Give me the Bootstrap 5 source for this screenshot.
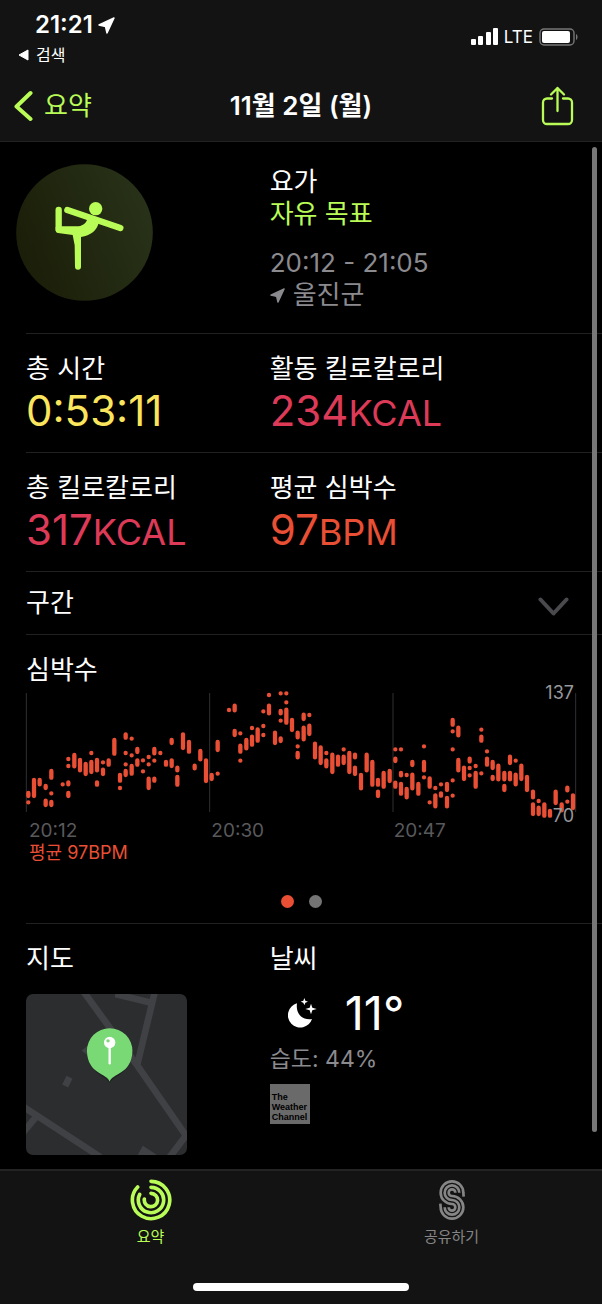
<!DOCTYPE html>
<html lang="ko" data-bs-theme="dark">
<head>
<meta charset="utf-8">
<meta name="viewport" content="width=device-width, initial-scale=1">
<title>11월 2일 (월)</title>
<link href="https://cdn.jsdelivr.net/npm/bootstrap@5.3.0/dist/css/bootstrap.min.css" rel="stylesheet">
<style>
  :root { --lime: #b9fb57; --bar: #131313; --rule: #212123; --dim: #8b8a8f; --heart: #e84f34; --move: #dd3a58; --time: #fbe55d; }
  body { background: #000; color: #fff; font-family: Inter, "Noto Sans CJK KR", sans-serif; font-size: 26px; line-height: 32px; }
  a { text-decoration: none; color: inherit; }
  svg { display: block; flex: none; }
  .top-bar { background: var(--bar); border-bottom: 1px solid #222; }
  .status-row { height: 70px; padding: 10px 24px 0 18px; }
  .clock { font-size: 24px; line-height: 30px; font-weight: 600; padding-left: 17px; gap: 5px; }
  .back-app { font-size: 16px; line-height: 30px; gap: 7px; }
  .carrier { font-size: 17px; line-height: 24px; padding-top: 15px; gap: 6px; }
  .title-row { height: 71px; padding: 0 14px; display: grid; grid-template-columns: 1fr auto 1fr; align-items: center; }
  .title-row h1 { font-size: 26px; line-height: 32px; font-weight: 600; }
  .share { margin-right: 14px; }
  .lime { color: var(--lime); }
  .dim { color: var(--dim); }
  .band { margin-left: 26px; border-bottom: 1px solid var(--rule); }
  .pair { display: grid; grid-template-columns: minmax(0, 11fr) minmax(0, 15fr); }
  .intro { padding: 22px 0; }
  .facts { padding-top: 2px; }
  .sport { width: 137px; margin-left: -10px; }
  .when { margin-top: 17px; }
  .metric { padding: 19px 0 15px; }
  .label-text { font-size: 26px; line-height: 32px; font-weight: 400; margin: 0; }
  .value { font-size: 42px; line-height: 52px; height: 52px; }
  .value small { font-size: 36px; line-height: 36px; }
  .time-value { color: var(--time); }
  .move-value { color: var(--move); }
  .heart-value { color: var(--heart); }
  .splits { height: 63px; padding: 0 33px 0 0; color: #fff; background: none; border-width: 0 0 1px; text-align: left; width: calc(100% - 26px); }
  .heart { padding: 19px 0 15px; }
  .plot { margin: 7px 26px 0 0; position: relative; }
  .plot svg { width: 100%; height: auto; overflow: visible; }
  .peak, .floor { position: absolute; right: 2px; font-size: 18px; line-height: 20px; color: #98989c; }
  .peak { top: -10px; }
  .floor { bottom: -7px; }
  .ticks { display: grid; grid-template-columns: repeat(3, 1fr); margin-right: 26px; font-size: 19px; line-height: 23px; color: #59595c; padding-left: 3px; }
  .average { font-size: 18px; line-height: 22px; color: var(--heart); padding-left: 3px; }
  .pager { gap: 15px; margin: 31px 26px 0 0; }
  .pager button { width: 13px; height: 13px; border: 0; padding: 0; border-radius: 50%; background: #747474; }
  .pager .on { background: var(--heart); }
  .place { padding: 19px 0 14px 26px; }
  .map { width: 161px; margin-top: 19px; border-radius: 7px; }
  .temp { font-size: 47px; line-height: 56px; margin-top: 10px; gap: 28px; padding-left: 18px; }
  .humid { font-size: 23px; line-height: 36px; }
  .twc { width: 40px; height: 40px; margin-top: 7px; padding: 8px 2px 0; background: #6a6a6a; color: #000; font: 700 9px/10px "Liberation Sans", sans-serif; }
  .scroller { position: absolute; right: 5px; top: 5px; bottom: 37px; width: 5px; border-radius: 3px; background: #777; }
  .tabs { background: var(--bar); border-top: 2px solid #242424; }
  .tabs a { font-size: 15px; line-height: 20px; padding-top: 8px; color: #858585; gap: 6px; }
  .tabs a.lime { color: var(--lime); }
  .home { width: 36%; height: 8px; border-radius: 4px; background: #fff; margin: 36px auto 13px; }
</style>
</head>
<body>
<div class="d-flex flex-column min-vh-100">
  <header class="top-bar">
    <div class="status-row d-flex justify-content-between align-items-start">
      <div>
        <div class="clock d-flex align-items-center">21:21
          <svg width="17" height="17" viewBox="0 0 17 17"><path d="M16 1 9 16 7.500 9.500 1 8Z" fill="#fff" stroke="#fff" stroke-width="1.500" stroke-linejoin="round"/></svg>
        </div>
        <a href="#" class="back-app d-flex align-items-center">
          <svg width="11" height="12" viewBox="0 0 11 12"><path d="M10 1V11L1 6Z" fill="#fff" stroke="#fff" stroke-linejoin="round"/></svg>검색</a>
      </div>
      <div class="carrier d-flex align-items-center">
        <svg width="27" height="18" viewBox="0 0 27 18" fill="#fff"><rect y="11" width="5" height="6" rx="1"/><rect x="7" y="8" width="5" height="9" rx="1"/><rect x="15" y="4" width="5" height="13" rx="1"/><rect x="22" width="5" height="17" rx="1"/></svg>
        <span>LTE</span>
        <svg width="39" height="18" viewBox="0 0 39 18"><rect x="1" y="1" width="34" height="16" rx="4" fill="none" stroke="#777" stroke-width="1.400"/><rect x="3" y="3" width="28" height="12" rx="2" fill="#fff"/><path d="M37 6c2 1 2 5 0 6Z" fill="#777"/></svg>
      </div>
    </div>
    <nav class="title-row">
      <a href="#" class="lime d-flex align-items-center">
        <svg width="30" height="32" viewBox="0 0 30 32" fill="none" stroke="currentColor" stroke-width="4" stroke-linecap="round" stroke-linejoin="round"><path d="M16.500 3 2.500 16.500 16.500 29"/></svg>요약</a>
      <h1 class="m-0">11월 2일 (월)</h1>
      <button class="btn p-0 border-0 lime ms-auto share" aria-label="공유">
        <svg width="33" height="40" viewBox="0 0 33 40" fill="none" stroke="currentColor" stroke-width="2.300" stroke-linecap="round" stroke-linejoin="round"><path d="M11 12.500H6a4 4 0 0 0-4 4V34a4 4 0 0 0 4 4H27a4 4 0 0 0 4-4V16.500a4 4 0 0 0-4-4H22M16.500 25V2M10 8.500 16.500 2 23 8.500"/></svg>
      </button>
    </nav>
  </header>

  <main class="position-relative flex-grow-1">
    <section class="band pair intro">
      <svg class="sport" viewBox="48 56 411 411">
        <defs><linearGradient id="disc" x1="0" y1=".6" x2="1" y2=".2"><stop stop-color="#1b1e08"/><stop offset="1" stop-color="#29331a"/></linearGradient></defs>
        <circle cx="253.500" cy="261.500" r="205" fill="url(#disc)"/>
        <g fill="#b9fb57"><circle cx="287" cy="190" r="20"/><path d="M167 245V256Q167 262 174 263L218 269 224 300 225 364A9 9 0 0 0 243 364V275C272 270 291 255 296 232L262 221C258 236 245 243 230 243H186Z"/></g>
        <path d="M202 194 361 248M176 194V252" stroke="#b9fb57" stroke-width="19" stroke-linecap="round"/>
      </svg>
      <div class="facts">
        <div>요가</div>
        <div class="lime">자유 목표</div>
        <div class="when dim">20:12 - 21:05</div>
        <div class="dim d-flex align-items-center gap-2">
          <svg width="15" height="15" viewBox="0 0 17 17"><path d="M16 1 9 16 7.500 9.500 1 8Z" fill="currentColor" stroke="currentColor" stroke-width="1.500" stroke-linejoin="round"/></svg>울진군</div>
      </div>
    </section>

    <section class="band pair metric">
      <div><h2 class="label-text">총 시간</h2><div class="value time-value">0:53:11</div></div>
      <div><h2 class="label-text">활동 킬로칼로리</h2><div class="value move-value">234<small>KCAL</small></div></div>
    </section>
    <section class="band pair metric">
      <div><h2 class="label-text">총 킬로칼로리</h2><div class="value move-value">317<small>KCAL</small></div></div>
      <div><h2 class="label-text">평균 심박수</h2><div class="value heart-value">97<small>BPM</small></div></div>
    </section>

    <button class="band splits d-flex align-items-center justify-content-between">
      <span>구간</span>
      <svg class="mt-2" width="31" height="20" viewBox="0 0 31 20" fill="none" stroke="#4a494d" stroke-width="4" stroke-linecap="round" stroke-linejoin="round"><path d="M2.500 2.500 15.500 16.500 28.500 2.500"/></svg>
    </button>

    <section class="band heart">
      <h2 class="label-text">심박수</h2>
      <div class="plot">
        <!-- three units to a pixel; one slot every 17.2 units -->
        <svg viewBox="0 42 1650 378">
          <path d="M1 42V399M551 42V399M1101 42V399M1649 42V399" stroke="#303032" stroke-width="3"/>
          <path id="beats" fill="none" stroke="#e84f34" stroke-width="13" stroke-linecap="round"/>
        </svg>
        <span class="peak">137</span><span class="floor">70</span>
      </div>
      <div class="ticks"><span>20:12</span><span>20:30</span><span>20:47</span></div>
      <div class="average">평균 97BPM</div>
      <div class="pager d-flex justify-content-center">
        <button class="on" aria-label="1페이지"></button><button aria-label="2페이지"></button>
      </div>
    </section>

    <section class="pair place">
      <div>
        <h2 class="label-text">지도</h2>
        <svg class="map" viewBox="78 315 481 481">
          <rect x="78" y="315" width="481" height="481" fill="#2c2d2f"/>
          <path d="M250 308 410 528 556 738 505 805M463 308 410 528M345 315 455 342M70 652 300 802M70 728 108 682M195 590 208 564" fill="none" stroke="#404145" stroke-width="20"/>
          <path d="M427 768 475 800H410ZM244 484 262 470V498Z" fill="#404145"/>
          <path d="M328 582C320 560 266 555 260 492A68 68 0 0 1 396 492C390 555 336 560 328 582Z" fill="#000" opacity=".25"/>
          <path d="M328 577C322 551 262 556 260 485A68 68 0 0 1 396 485C394 556 334 551 328 577Z" fill="#79d975"/>
          <path d="M328 470V522" stroke="#fff" stroke-width="7" stroke-linecap="round"/><circle cx="328" cy="460" r="17" fill="#fff"/><circle cx="323" cy="455" r="5" fill="#79d975"/>
        </svg>
      </div>
      <div>
        <h2 class="label-text">날씨</h2>
        <div class="temp d-flex align-items-center">
          <svg width="29" height="30" viewBox="114 321 87 90" fill="#fff"><path d="M141 337A37 37 0 1 0 186 384C160 389 136 370 141 337ZM163 321 166 329 174 332 166 335 163 343 160 335 152 332 160 329ZM183 338 187 350 200 354 187 358 183 370 179 358 166 354 179 350Z"/></svg>
          <span>11°</span>
        </div>
        <div class="humid dim">습도: 44%</div>
        <div class="twc">The<br>Weather<br>Channel</div>
      </div>
    </section>
    <div class="scroller"></div>
  </main>

  <footer class="tabs">
    <nav class="d-flex">
      <a href="#" class="lime col-6 d-flex flex-column align-items-center">
        <svg width="42" height="42" viewBox="90 45 126 126" fill="none" stroke="currentColor" stroke-width="11" stroke-linecap="round"><path d="M153 52A56 56 0 1 1 113 69M153 70A38 38 0 1 1 119 91M153 88A20 20 0 1 1 133 105"/></svg>요약</a>
      <a href="#" class="col-6 d-flex flex-column align-items-center">
        <svg width="42" height="42" viewBox="121 46 126 126" fill="none" stroke="currentColor" stroke-width="8"><path d="M219 99 218 87A34 34 0 1 0 184 121 10 10 0 1 1 174 131M206 87A22 22 0 1 0 184 109 22 22 0 1 1 162 131M194 87A10 10 0 1 0 184 97 34 34 0 1 1 150 131L149 120"/></svg>공유하기</a>
    </nav>
    <div class="home"></div>
  </footer>
</div>
<script src="https://cdn.jsdelivr.net/npm/bootstrap@5.3.0/dist/js/bootstrap.bundle.min.js"></script>
<script>
  // One entry per slot: "top-bottom" is a range, a lone number a single reading.
  const slots = `336-357 370|297-357|297-322|315-333 359-384|270-302 343 363-384||316|240 261 304-322 336-357|222-268|237-280|249-291|222 243-285|237-280 304-323|250 266-291|238-263|177-230|282-311 327|160-182 222 256 270-294|179 229 255-290|204-225 238-263|244 277|234 256 293-333|204-229 245 293-311|222|243-263|177-198 238-267|260-280 288-323|160-213|183-224|254-274|210-247|238-312|282-306|183-219 284||93|74-100 150-174|163 194-224 245|177-214|147 167-203|145-191|97 141 168|48 74-109|155-198|43 90-109 125 172-192|43 70 86-137|117-159|155-181 202 216-241|101-126 140-187|108 134-171|188-241|199-258|222 238-268|221-285|227-263|211 227-258|216-285|221-241 260-291|282-334|221-280|243-323|297-323 332-357|276-329|270-312|211 233-252 305-329|211 276-295 309-350|288 324-361|243-264 281-334|309-350|202 243-280 295|292-329 370|327 343-388|316 337-356|309-339 351-388|117-143 157 211 304 350|140-175 237-280|260-306|233-253 267 289|261 276-329|152 167-191 283|217 233-263|243-273 288-306|254-307|276-307 315-339|227-258 276-307|245 281-322|254-306|288-339|332-361 370-411|366 380-411|370-416|390-416|332-378|370-400|320-340 368|343-393`.split('|');
  document.getElementById('beats').setAttribute('d', slots.map((slot, i) =>
    slot.split(' ').filter(Boolean).map(r => {
      const [a, b] = r.split('-').map(Number);
      const x = Math.round(7 + i * 17.2);
      return b ? `M${x} ${a + 6}V${b - 6}` : `M${x} ${a}v.1`;
    }).join('')).join(''));
</script>
</body>
</html>
